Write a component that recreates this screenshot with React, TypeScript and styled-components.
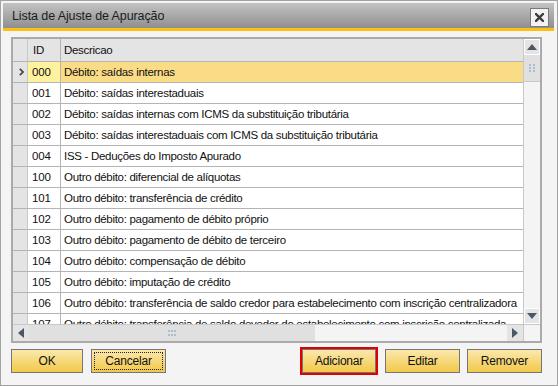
import styled, { createGlobalStyle } from "styled-components";

const GlobalStyle = createGlobalStyle`
  html, body {
    margin: 0;
    padding: 0;
    background: #ffffff;
  }
  body {
    font-family: "Liberation Sans", Arial, sans-serif;
  }
`;

const rows = [
  { id: "000", text: "Débito: saídas internas" },
  { id: "001", text: "Débito: saídas interestaduais" },
  { id: "002", text: "Débito: saídas internas com ICMS da substituição tributária" },
  { id: "003", text: "Débito: saídas interestaduais com ICMS da substituição tributária" },
  { id: "004", text: "ISS - Deduções do Imposto Apurado" },
  { id: "100", text: "Outro débito: diferencial de alíquotas" },
  { id: "101", text: "Outro débito: transferência de crédito" },
  { id: "102", text: "Outro débito: pagamento de débito próprio" },
  { id: "103", text: "Outro débito: pagamento de débito de terceiro" },
  { id: "104", text: "Outro débito: compensação de débito" },
  { id: "105", text: "Outro débito: imputação de crédito" },
  { id: "106", text: "Outro débito: transferência de saldo credor para estabelecimento com inscrição centralizadora" },
  { id: "107", text: "Outro débito: transferência de saldo devedor do estabelecimento com inscrição centralizada" },
];

const Grip = ({ vertical }: { vertical?: boolean }) => (
  <svg width={vertical ? 6 : 8} height={vertical ? 8 : 6} viewBox={vertical ? "0 0 6 8" : "0 0 8 6"}>
    {(vertical
      ? [[0, 0], [4, 0], [0, 3], [4, 3], [0, 6], [4, 6]]
      : [[0, 0], [3, 0], [6, 0], [0, 4], [3, 4], [6, 4]]
    ).map(([x, y], i) => (
      <rect key={i} x={x} y={y} width={2} height={2} fill="#aebccb" />
    ))}
  </svg>
);

const Arrow = ({ dir }: { dir: "up" | "down" | "left" | "right" }) => {
  const pts = {
    up: "0,6 5,0 10,6",
    down: "0,0 10,0 5,6",
    left: "6,0 6,10 0,5",
    right: "0,0 0,10 6,5",
  }[dir];
  const horiz = dir === "left" || dir === "right";
  return (
    <svg width={horiz ? 6 : 10} height={horiz ? 10 : 6} viewBox={horiz ? "0 0 6 10" : "0 0 10 6"}>
      <polygon points={pts} fill="#4a5866" />
    </svg>
  );
};

const App = () => {
  return (
    <>
      <GlobalStyle />
      <Window>
        <TitleBar>
          <Title>Lista de Ajuste de Apuração</Title>
          <CloseButton>
            <svg width="9" height="9" viewBox="0 0 9 9">
              <path d="M1 1 L8 8 M8 1 L1 8" stroke="#3c3c3c" strokeWidth="2.4" strokeLinecap="square" />
            </svg>
          </CloseButton>
        </TitleBar>

        <Body>
          <GridFrame>
            <Rows>
              <HeaderRow>
                <RowHead />
                <IdCell $header>ID</IdCell>
                <DescCell $header>Descricao</DescCell>
              </HeaderRow>
              {rows.map((r, i) => (
                <Row key={r.id}>
                  <RowHead>
                    {i === 0 && (
                      <svg width="5" height="8" viewBox="0 0 5 8">
                        <path d="M0.8 0.8 L4 4 L0.8 7.2" stroke="#444" strokeWidth="1.7" fill="none" />
                      </svg>
                    )}
                  </RowHead>
                  <IdCell $selected={i === 0}>{r.id}</IdCell>
                  <DescCell $selected={i === 0}>{r.text}</DescCell>
                </Row>
              ))}
            </Rows>

            <VScroll>
              <ScrollButton>
                <Arrow dir="up" />
              </ScrollButton>
              <VThumb>
                <Grip vertical />
              </VThumb>
              <Track />
              <ScrollButton>
                <Arrow dir="down" />
              </ScrollButton>
            </VScroll>

            <HScroll>
              <ScrollButton $plain>
                <Arrow dir="left" />
              </ScrollButton>
              <HThumb>
                <Grip />
              </HThumb>
              <Track />
              <ScrollButton $plain>
                <Arrow dir="right" />
              </ScrollButton>
            </HScroll>
            <Corner />
          </GridFrame>

          <ButtonRow>
            <ButtonGroup $gap={8}>
              <ActionButton $width={72}>OK</ActionButton>
              <ActionButton $focused>
                <FocusRect>Cancelar</FocusRect>
              </ActionButton>
            </ButtonGroup>
            <ButtonGroup $gap={7}>
              <Highlight>
                <ActionButton $width={74}>Adicionar</ActionButton>
              </Highlight>
              <ActionButton>Editar</ActionButton>
              <ActionButton>Remover</ActionButton>
            </ButtonGroup>
          </ButtonRow>
        </Body>
      </Window>
    </>
  );
};

export default App;

const Window = styled.div`
  width: 558px;
  height: 386px;
  box-sizing: border-box;
  border: 1px solid #a3a3a3;
  padding: 2px 3px 2px 2px;
  background: #f4f4f4;
  display: flex;
  flex-direction: column;
`;

const TitleBar = styled.div`
  height: 25px;
  flex-shrink: 0;
  display: flex;
  align-items: center;
  justify-content: space-between;
  padding: 0 5px 0 9px;
  background: linear-gradient(#c3c3c3, #8f8f8f);
  border-bottom: 3px solid #fcbf12;
`;

const Title = styled.div`
  font-size: 12.5px;
  letter-spacing: -0.1px;
  color: #1c1c1c;
  padding-top: 1px;
`;

const CloseButton = styled.div`
  width: 17px;
  height: 17px;
  margin-top: 4px;
  border: 1px solid #7a7a7a;
  background: #f2f2f2;
  display: flex;
  align-items: center;
  justify-content: center;
`;

const Body = styled.div`
  flex: 1;
  display: flex;
  flex-direction: column;
  padding: 6px 12px 0 8px;
`;

const GridFrame = styled.div`
  height: 306px;
  box-sizing: border-box;
  border: 2px solid #aaaaaa;
  display: grid;
  grid-template-columns: 1fr 17px;
  grid-template-rows: 1fr 17px;
  background: #ffffff;
`;

const Rows = styled.div`
  overflow: hidden;
  display: flex;
  flex-direction: column;
`;

const HeaderRow = styled.div`
  display: flex;
  height: 23px;
  flex-shrink: 0;
  box-sizing: border-box;
  border-bottom: 1px solid #b4b4b4;
  background: #e4e4e4;
`;

const Row = styled.div`
  display: flex;
  height: 21px;
  flex-shrink: 0;
  box-sizing: border-box;
  border-bottom: 1px solid #b4b4b4;
`;

const RowHead = styled.div`
  width: 15px;
  flex-shrink: 0;
  box-sizing: border-box;
  border-right: 1px solid #c8c8c8;
  background: #e4e4e4;
  display: flex;
  align-items: center;
  justify-content: center;
  padding-left: 2px;
`;

const IdCell = styled.div<{ $header?: boolean; $selected?: boolean }>`
  width: 33px;
  flex-shrink: 0;
  box-sizing: border-box;
  border-right: 1px solid #b4b4b4;
  padding-left: ${(p) => (p.$header ? "5px" : "4px")};
  font-size: 11.5px;
  letter-spacing: -0.1px;
  color: #111;
  display: flex;
  align-items: center;
  white-space: nowrap;
  background: ${(p) => (p.$header ? "#e4e4e4" : p.$selected ? "#fff29e" : "#ffffff")};
`;

const DescCell = styled.div<{ $header?: boolean; $selected?: boolean }>`
  flex: 1;
  min-width: 0;
  padding-left: 3px;
  font-size: 11.5px;
  letter-spacing: -0.3px;
  color: #111;
  display: flex;
  align-items: center;
  white-space: nowrap;
  overflow: hidden;
  background: ${(p) => (p.$header ? "#e4e4e4" : p.$selected ? "#fbdc86" : "#ffffff")};
`;

const VScroll = styled.div`
  display: flex;
  flex-direction: column;
  background: #f4f4f4;
  border-left: 1px solid #c8c8c8;
`;

const HScroll = styled.div`
  display: flex;
  background: #f4f4f4;
  border-top: 1px solid #c8c8c8;
`;

const ScrollButton = styled.div<{ $plain?: boolean }>`
  width: 16px;
  height: 16px;
  flex-shrink: 0;
  box-sizing: border-box;
  background: #e4e4e4;
  border: ${(p) => (p.$plain ? "none" : "1px solid #ffffff")};
  display: flex;
  align-items: center;
  justify-content: center;
`;

const VThumb = styled.div`
  height: 26px;
  flex-shrink: 0;
  background: #e0e0e0;
  border-bottom: 1px solid #c8c8c8;
  display: flex;
  align-items: center;
  justify-content: center;
`;

const HThumb = styled.div`
  width: 286px;
  flex-shrink: 0;
  background: #e0e0e0;
  display: flex;
  align-items: center;
  justify-content: center;
`;

const Track = styled.div`
  flex: 1;
  background: #f4f4f4;
`;

const Corner = styled.div`
  background: #f4f4f4;
  border-top: 1px solid #c8c8c8;
  border-left: 1px solid #c8c8c8;
`;

const ButtonRow = styled.div`
  display: flex;
  justify-content: space-between;
  align-items: center;
  margin-top: 4px;
`;

const ButtonGroup = styled.div<{ $gap: number }>`
  display: flex;
  align-items: center;
  gap: ${(p) => p.$gap}px;
`;

const Highlight = styled.div`
  border: 2px solid #e10000;
  display: flex;
`;

const ActionButton = styled.div<{ $focused?: boolean; $width?: number }>`
  width: ${(p) => p.$width ?? 75}px;
  height: 24px;
  box-sizing: border-box;
  border: 1px solid #767676;
  background: linear-gradient(#fbe8ae, #f2c948);
  font-size: 12px;
  letter-spacing: -0.2px;
  color: #111;
  display: flex;
  align-items: center;
  justify-content: center;
  padding: ${(p) => (p.$focused ? "2px" : "0")};
`;

const FocusRect = styled.div`
  flex: 1;
  align-self: stretch;
  border: 1px dotted #222;
  display: flex;
  align-items: center;
  justify-content: center;
`;
